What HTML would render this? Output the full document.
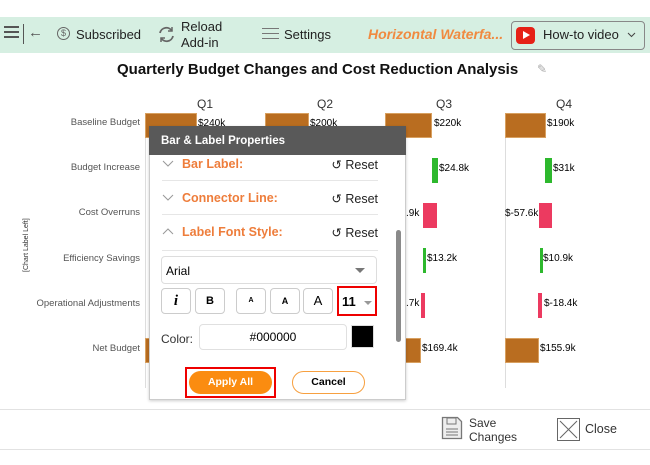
<!DOCTYPE html>
<html><head><style>
*{margin:0;padding:0;box-sizing:border-box}
body{width:650px;height:465px;background:#fff;font-family:"Liberation Sans",Arial,sans-serif;position:relative;overflow:hidden}
.a{position:absolute}
.tb{top:17px;left:0;width:650px;height:36px;background:#d6efe2}
.tbt{font-size:13px;color:#222}
.bar{position:absolute}
.o{background:#b96d20;border:1px solid #d8a060}
.g{background:#2db82d}
.r{background:#ec3a60}
.lbl{position:absolute;font-size:9.5px;color:#555;text-align:right;width:130px;left:10px}
.val{position:absolute;font-size:10px;color:#000}
.vl{position:absolute;width:1px;background:#ddd}
.q{position:absolute;font-size:12px;color:#333}
.sec{position:absolute;left:162px;width:216px;height:34px;border-bottom:1px solid #e6e6e6;font-size:12.5px;font-weight:bold;color:#ee7d3b}
.sec .rs{position:absolute;right:0;top:10px;color:#222;font-weight:normal;font-size:12.5px}
.sec svg{position:absolute;left:0;top:13px}
.sec .t{position:absolute;left:20px;top:10px}
.btn{position:absolute;top:288px;height:26px;border:1px solid #ccc;border-radius:4px;background:#fff;font-size:11px;text-align:center;line-height:24px;font-weight:bold}
</style></head><body>
<div class="a tb"></div>
<div class="a" style="left:4px;top:26px;width:15px;height:2px;background:#555;box-shadow:0 5px 0 #555,0 10px 0 #555"></div>
<div class="a" style="left:23px;top:24px;width:1px;height:20px;background:#555"></div>
<div class="a tbt" style="left:28px;top:24px;font-size:15px;color:#555">←</div>
<div class="a" style="left:57px;top:27px;width:13px;height:13px;border:1px solid #666;border-radius:50%;font-size:9px;text-align:center;line-height:11px;color:#666">$</div>
<div class="a tbt" style="left:76px;top:27px">Subscribed</div>
<svg class="a" style="left:157px;top:25px" width="19" height="19" viewBox="0 0 19 19"><path d="M3 8a6.5 6.5 0 0 1 12-2M16 11a6.5 6.5 0 0 1-12 2" fill="none" stroke="#666" stroke-width="1.8"/><path d="M15 2v4h-4M4 17v-4h4" fill="none" stroke="#666" stroke-width="1.5"/></svg>
<div class="a tbt" style="left:181px;top:19px;line-height:16px">Reload<br>Add-in</div>
<div class="a" style="left:262px;top:28px;width:17px;height:1px;background:#777;box-shadow:0 5px 0 #777,0 10px 0 #777"></div>
<div class="a tbt" style="left:284px;top:27px">Settings</div>
<div class="a" style="left:368px;top:26px;font-size:14px;font-style:italic;font-weight:bold;color:#f08a40">Horizontal Waterfa...</div>
<div class="a" style="left:511px;top:21px;width:134px;height:29px;border:1px solid #888;border-radius:4px;background:#d6efe2"></div>
<div class="a" style="left:516px;top:27px;width:19px;height:17px;background:#e62117;border-radius:4px"></div>
<div class="a" style="left:523px;top:31px;width:0;height:0;border-left:7px solid #fff;border-top:4.5px solid transparent;border-bottom:4.5px solid transparent"></div>
<div class="a tbt" style="left:543px;top:27px">How-to video</div>
<svg class="a" style="left:627px;top:32px" width="9" height="6"><path d="M1 1l3.5 3.5L8 1" fill="none" stroke="#444"/></svg>

<div class="a" style="left:117px;top:61px;font-size:15px;font-weight:bold;color:#111">Quarterly Budget Changes and Cost Reduction Analysis</div>
<div class="a" style="left:537px;top:62px;font-size:12px;color:#aaa">✎</div>

<div class="q" style="left:197px;top:97px">Q1</div>
<div class="q" style="left:317px;top:97px">Q2</div>
<div class="q" style="left:436px;top:97px">Q3</div>
<div class="q" style="left:556px;top:97px">Q4</div>

<div class="vl" style="left:145px;top:113px;height:275px"></div>
<div class="vl" style="left:265px;top:113px;height:275px"></div>
<div class="vl" style="left:385px;top:113px;height:275px"></div>
<div class="vl" style="left:505px;top:113px;height:275px"></div>

<div class="lbl" style="top:117px">Baseline Budget</div>
<div class="lbl" style="top:162px">Budget Increase</div>
<div class="lbl" style="top:207px">Cost Overruns</div>
<div class="lbl" style="top:253px">Efficiency Savings</div>
<div class="lbl" style="top:298px">Operational Adjustments</div>
<div class="lbl" style="top:343px">Net Budget</div>
<div class="a" style="font-size:7px;color:#333;transform:rotate(-90deg);transform-origin:left top;left:23px;top:272px;white-space:nowrap">[Chart Label Left]</div>

<div class="bar o" style="left:145px;top:113px;width:52px;height:25px"></div>
<div class="val" style="left:198px;top:118px">$240k</div>
<div class="bar o" style="left:265px;top:113px;width:44px;height:25px"></div>
<div class="val" style="left:310px;top:118px">$200k</div>
<div class="bar o" style="left:385px;top:113px;width:47px;height:25px"></div>
<div class="val" style="left:434px;top:118px">$220k</div>
<div class="bar o" style="left:505px;top:113px;width:41px;height:25px"></div>
<div class="val" style="left:547px;top:118px">$190k</div>
<div class="bar g" style="left:432px;top:158px;width:6px;height:25px"></div>
<div class="val" style="left:439px;top:163px">$24.8k</div>
<div class="bar g" style="left:545px;top:158px;width:7px;height:25px"></div>
<div class="val" style="left:553px;top:163px">$31k</div>
<div class="bar r" style="left:423px;top:203px;width:14px;height:25px"></div>
<div class="val" style="left:406px;top:208px">.9k</div>
<div class="bar r" style="left:539px;top:203px;width:13px;height:25px"></div>
<div class="val" style="left:505px;top:208px">$-57.6k</div>
<div class="bar g" style="left:423px;top:248px;width:3px;height:25px"></div>
<div class="val" style="left:427px;top:253px">$13.2k</div>
<div class="bar g" style="left:540px;top:248px;width:3px;height:25px"></div>
<div class="val" style="left:543px;top:253px">$10.9k</div>
<div class="bar r" style="left:421px;top:293px;width:4px;height:25px"></div>
<div class="val" style="left:406px;top:298px">.7k</div>
<div class="bar r" style="left:538px;top:293px;width:4px;height:25px"></div>
<div class="val" style="left:544px;top:298px">$-18.4k</div>
<div class="bar o" style="left:145px;top:338px;width:5px;height:25px"></div>
<div class="bar o" style="left:385px;top:338px;width:36px;height:25px"></div>
<div class="val" style="left:422px;top:343px">$169.4k</div>
<div class="bar o" style="left:505px;top:338px;width:34px;height:25px"></div>
<div class="val" style="left:540px;top:343px">$155.9k</div>

<!-- dialog -->
<div class="a" style="left:149px;top:126px;width:257px;height:274px;background:#fff;border:1px solid #ccc;box-shadow:0 1px 3px rgba(0,0,0,.2)"></div>
<div class="a" style="left:149px;top:126px;width:257px;height:29px;background:#595959;color:#fff;font-size:11.5px;font-weight:bold;padding:9px 0 0 12px">Bar &amp; Label Properties</div>
<div class="a" style="left:396px;top:230px;width:5px;height:112px;background:#8a8a8a;border-radius:3px"></div>
<div class="sec" style="top:147px"><svg width="12" height="7"><path d="M1 1l5 5 5-5" fill="none" stroke="#999"/></svg><span class="t">Bar Label:</span><span class="rs">↺ Reset</span></div>
<div class="sec" style="top:181px"><svg width="12" height="7"><path d="M1 1l5 5 5-5" fill="none" stroke="#999"/></svg><span class="t">Connector Line:</span><span class="rs">↺ Reset</span></div>
<div class="sec" style="top:215px;height:36px"><svg width="12" height="7"><path d="M1 6l5-5 5 5" fill="none" stroke="#999"/></svg><span class="t">Label Font Style:</span><span class="rs">↺ Reset</span></div>
<div class="a" style="left:161px;top:256px;width:216px;height:28px;border:1px solid #ddd;border-radius:4px;font-size:12px;padding:7px 0 0 4px">Arial</div>
<div class="a" style="left:355px;top:268px;border-top:5px solid #777;border-left:5px solid transparent;border-right:5px solid transparent"></div>
<div class="btn" style="left:161px;width:30px;font-family:'Liberation Serif',serif;font-style:italic;font-size:15px">i</div>
<div class="btn" style="left:195px;width:30px">B</div>
<div class="btn" style="left:236px;width:30px;font-size:7px">A</div>
<div class="btn" style="left:270px;width:30px;font-size:9px">A</div>
<div class="btn" style="left:303px;width:30px;font-size:13px;font-weight:normal">A</div>
<div class="a" style="left:337px;top:286px;width:40px;height:30px;border:2px solid #e00;font-size:13px;font-weight:bold;padding:6px 0 0 3px">11</div>
<div class="a" style="left:364px;top:301px;border-top:4px solid #999;border-left:4px solid transparent;border-right:4px solid transparent"></div>
<div class="a" style="left:161px;top:332px;font-size:12px;color:#333">Color:</div>
<div class="a" style="left:199px;top:324px;width:148px;height:26px;border:1px solid #e0e0e0;border-radius:4px;font-size:12px;text-align:center;line-height:24px">#000000</div>
<div class="a" style="left:351px;top:325px;width:23px;height:23px;background:#000;border:1px solid #ddd"></div>
<div class="a" style="left:185px;top:367px;width:91px;height:31px;border:2px solid #e00"></div>
<div class="a" style="left:189px;top:371px;width:83px;height:23px;background:#fb8c10;border-radius:12px;color:#fff;font-size:10.5px;font-weight:bold;text-align:center;line-height:23px">Apply All</div>
<div class="a" style="left:292px;top:371px;width:73px;height:23px;border:1px solid #f7a040;border-radius:12px;font-size:10.5px;font-weight:bold;text-align:center;line-height:21px">Cancel</div>

<!-- bottom -->
<div class="a" style="left:0;top:409px;width:650px;height:1px;background:#e2e2e2"></div>
<svg class="a" style="left:441px;top:416px" width="22" height="24" viewBox="0 0 22 24"><path d="M1.5 1.5h15l4 4v17h-19z" fill="#eee" stroke="#777" stroke-width="1.3"/><rect x="6" y="2" width="9" height="6" fill="none" stroke="#777"/><path d="M5 13h12M5 16h12M5 19h12" stroke="#777"/></svg>
<div class="a" style="left:469px;top:416px;font-size:12px;color:#333;line-height:14px">Save<br>Changes</div>
<svg class="a" style="left:557px;top:418px" width="23" height="23"><rect x=".5" y=".5" width="22" height="22" fill="#fff" stroke="#666"/><path d="M3 3l17 17M20 3L3 20" stroke="#666"/></svg>
<div class="a" style="left:585px;top:422px;font-size:12.5px;color:#333">Close</div>
<div class="a" style="left:0;top:449px;width:650px;height:1px;background:#e2e2e2"></div>
</body></html>
